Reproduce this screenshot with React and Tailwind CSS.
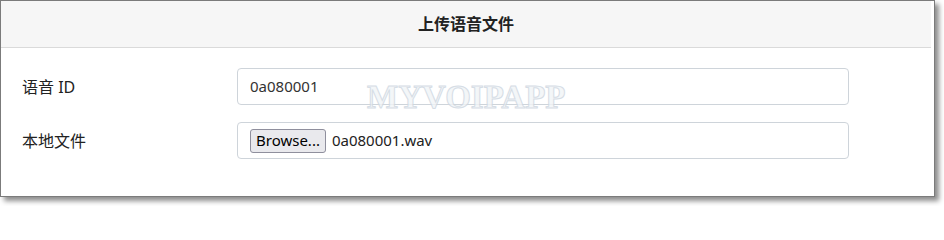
export default function App() {
  return (
    <div className="w-[944px] h-[206px] bg-white" style={{ fontFamily: '"Noto Sans", "Noto Sans CJK SC", sans-serif' }}>
      <div className="relative w-[935px] h-[197px] bg-white border border-[#7b7b7b] shadow-[4px_4px_5px_rgba(0,0,0,0.45)]">
        <div className="mr-[3px] h-[47px] bg-[#f6f6f6] border-b border-[#dadada] flex items-center justify-center">
          <h2 className="text-[16px] font-bold text-[#222]">上传语音文件</h2>
        </div>
        <div className="mr-[3px] pl-[21px] pt-[20px] flex flex-col gap-[17px]">
          <div className="flex items-center">
            <label className="w-[215px] text-[16px] text-[#222]">语音 ID</label>
            <div className="w-[612px] h-[37px] border border-[#ced4da] rounded-[4px] flex items-center pl-[12px] text-[15px] text-[#333]">
              0a080001
            </div>
          </div>
          <div className="flex items-center">
            <label className="w-[215px] text-[16px] text-[#222]">本地文件</label>
            <div className="w-[612px] h-[37px] border border-[#ced4da] rounded-[4px] flex items-center pl-[12px] text-[15px] text-[#222]">
              <button type="button" className="h-[24px] px-[5px] bg-[#e9e9ed] border border-[#8f8f9d] rounded-[3px] text-[15px] leading-none text-black">
                Browse...
              </button>
              <span className="ml-[6px]">0a080001.wav</span>
            </div>
          </div>
        </div>
        <div
          className="absolute left-[366px] top-[80px] text-[33px] font-bold leading-none text-[#f1f4f7] opacity-80 pointer-events-none select-none"
          style={{ fontFamily: '"Liberation Serif", serif', WebkitTextStroke: '1px #ccd5df' }}
        >
          MYVOIPAPP
        </div>
      </div>
    </div>
  );
}
